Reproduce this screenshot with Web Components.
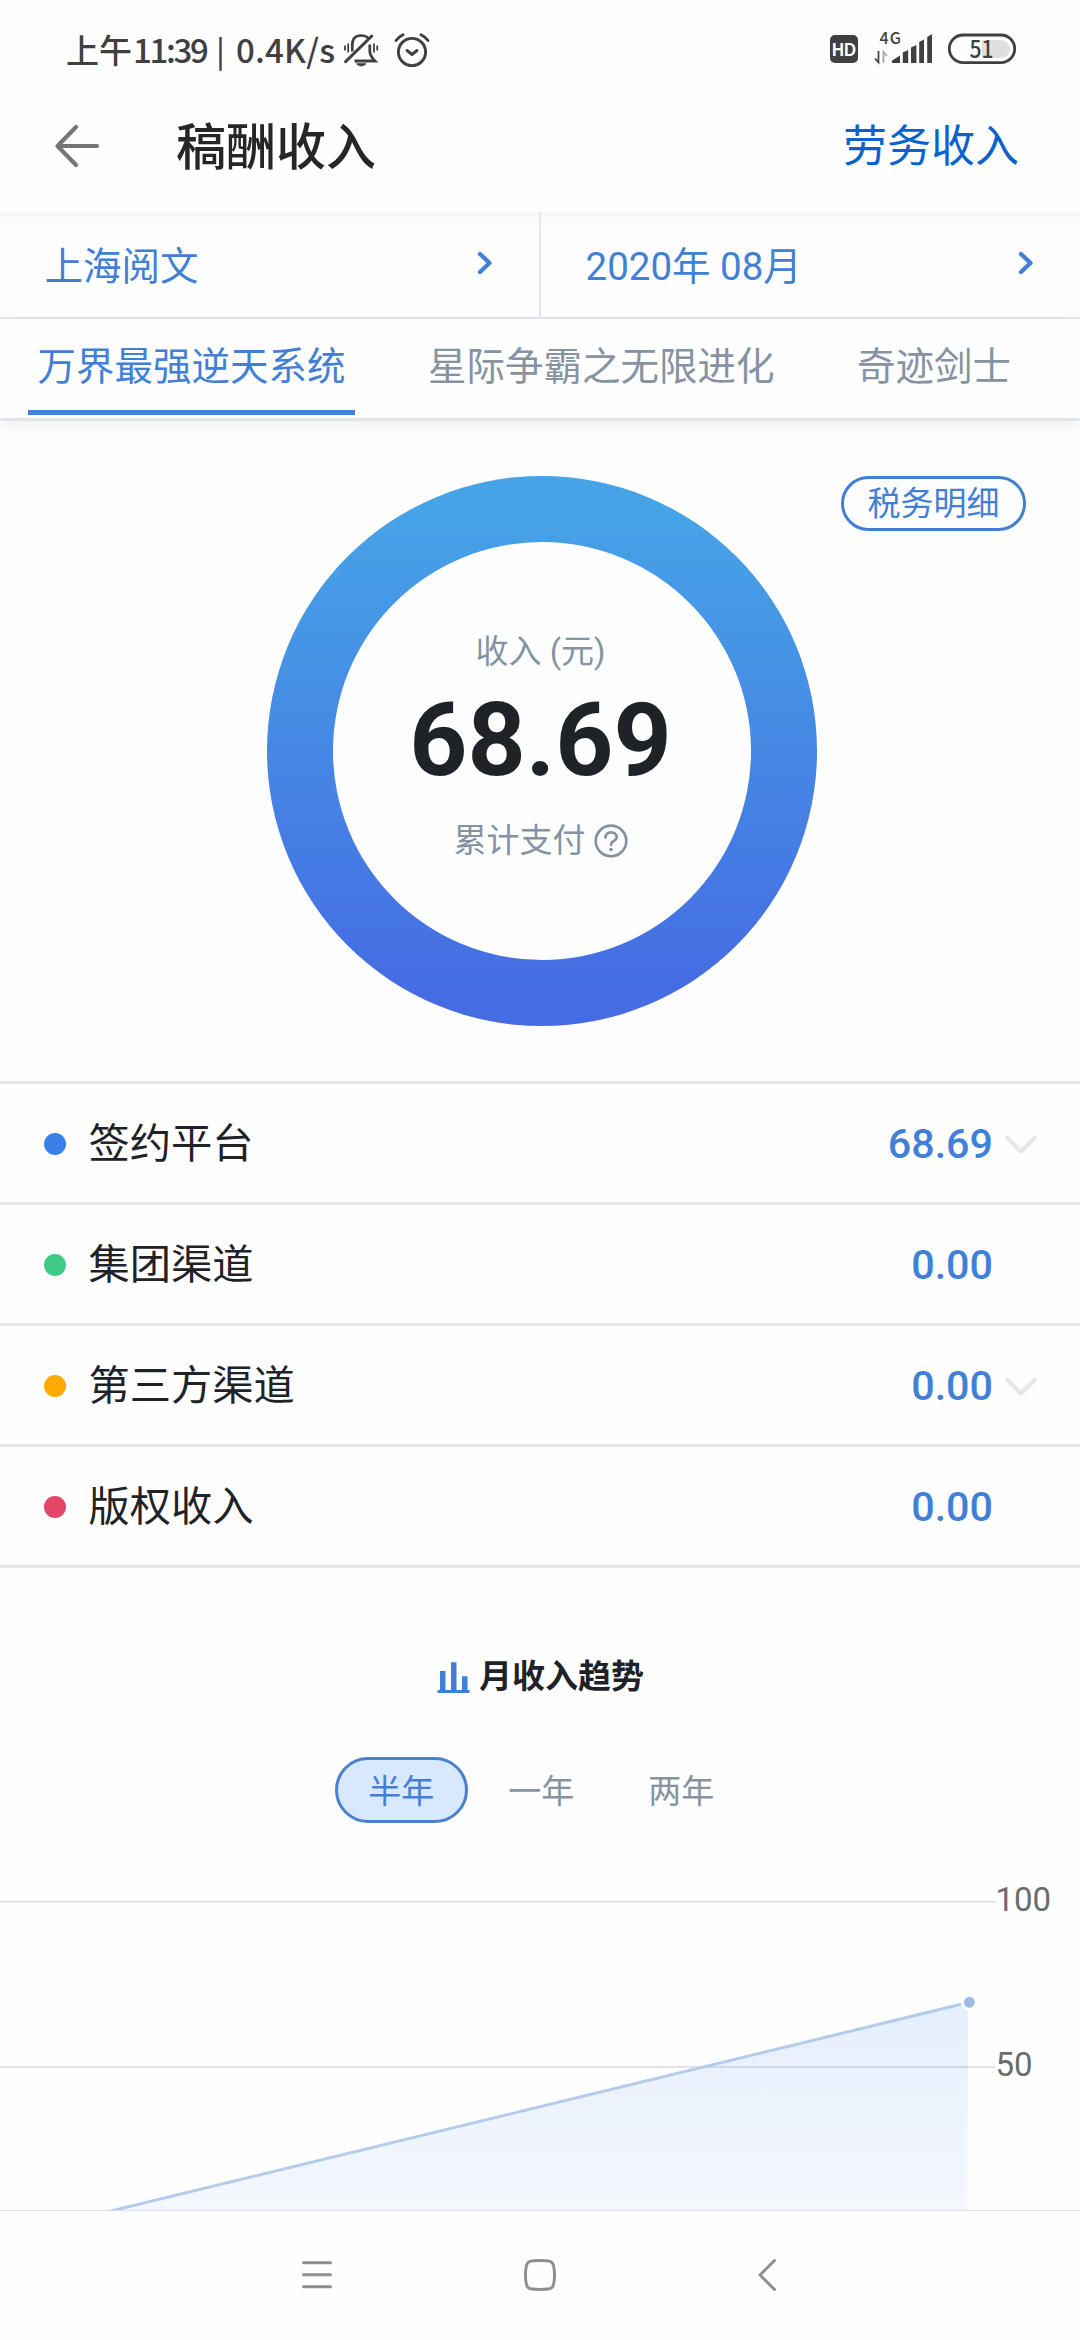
<!DOCTYPE html>
<html lang="zh-CN">
<head>
<meta charset="utf-8">
<title>稿酬收入</title>
<style>
html,body{margin:0;padding:0;background:#fefefe}
body{width:1080px;height:2340px;overflow:hidden;font-family:Roboto,"Noto Sans CJK SC",sans-serif;color:#1f2328}
</style>
</head>
<body>
<income-page></income-page>
<script>
const define=(name,html,init)=>customElements.define(name,class extends HTMLElement{
  constructor(){
    super();
    const t=document.createElement('template');
    t.innerHTML=html;
    this.attachShadow({mode:'open'}).append(t.content.cloneNode(true));
  }
  connectedCallback(){ if(init) init(this,this.shadowRoot); }
});

define('status-bar',`<style>
:host{display:flex;height:80px;padding:0 64px 0 66px;align-items:flex-start;justify-content:space-between;box-sizing:border-box;color:#404040}
.l,.r{display:flex;align-items:flex-start}
.t{display:flex;height:40px;margin-top:29px;line-height:40px;white-space:pre}
.cn{font:500 33px/40px "Noto Sans CJK SC",sans-serif}
.num{font:500 33px/41px "Noto Sans CJK SC",sans-serif;width:75px;margin-left:1px;letter-spacing:-2.300px}
.bar{width:25px;text-align:center;font:500 30px/40px "Noto Sans CJK SC",sans-serif}
.sp{font:500 33px/41px "Noto Sans CJK SC",sans-serif;letter-spacing:.2px;width:101px;margin-left:3px}
svg{display:block;overflow:visible}
</style>
<div class="l">
 <div class="t"><span class="cn">上午</span><span class="num">11:39</span><span class="bar">|</span><span class="sp">0.4K/s</span></div>
 <svg style="margin:30px 0 0 3px" width="42" height="40" viewBox="340 30 42 40" fill="none" stroke="#404040" stroke-width="2.700">
  <path d="M345.600 61.600L371.800 36" stroke-width="3" stroke-linecap="round"/>
  <path d="M352.300 51.500V45C352.300 38 356 35.500 361 35.500C364.500 35.500 367 36.500 368.500 38.500"/>
  <path d="M369.800 44.500V51C369.800 55.500 372 58 375 61H354.500" stroke-width="2.800"/>
  <path d="M356.500 63.800H366Q361.200 68 356.500 63.800Z" fill="#404040" stroke-width="1"/>
  <path d="M345 45.500V50.500M348.200 43.500V52.500M374 43.500V52.500M377.200 45.500V50.500" stroke-width="1.800"/>
 </svg>
 <svg style="margin:30px 0 0 9px" width="42" height="40" viewBox="391 30 42 40" fill="none" stroke="#404040" stroke-width="2.900" stroke-linecap="round" stroke-linejoin="round">
  <circle cx="412" cy="52" r="13.600"/><path d="M407 50.500L412 54.500L417 50.500M396 40.500Q398.500 37 403 34.800M428 40.500Q425.500 37 421 34.800"/>
 </svg>
</div>
<svg width="192" height="40" viewBox="828 30 192 40" style="margin:30px -4px 0 0" fill="#404040">
 <rect x="830" y="35" width="28" height="28" rx="5"/>
 <text x="844" y="55.500" font-family="Liberation Sans" font-weight="700" font-size="17.500" textLength="24" lengthAdjust="spacingAndGlyphs" fill="#fff" text-anchor="middle">HD</text>
 <text x="879.500" y="44" font-family="Noto Sans CJK SC" font-weight="500" font-size="16" textLength="21.500">4G</text>
 <path d="M878.500 51V62.500L875 58.500" fill="none" stroke="#404040" stroke-width="1.700"/>
 <path d="M883.500 62.700V52L887 56" fill="none" stroke="#a0a0a0" stroke-width="1.700"/>
 <path d="M892 63V60.500L900 55.500V63ZM902.800 63V52.500L908.200 50V63ZM911 63V47.500L916.400 45V63ZM919.200 63V42L924 39.500V63ZM927.200 63V37L932 34V63Z"/>
 <rect x="949.300" y="35" width="65.400" height="27.600" rx="13.800" fill="none" stroke="#404040" stroke-width="2.800"/>
 <path d="M982 40H1001A9 9 0 0 1 1001 58H982Z" fill="#e0e0e0"/>
 <text x="981.500" y="57.700" text-anchor="middle" font-family="Noto Sans CJK SC" font-weight="500" font-size="23.500" textLength="24" lengthAdjust="spacingAndGlyphs">51</text>
</svg>`);

define('app-header',`<style>
:host{display:flex;height:132px;align-items:center;padding:0 61px 0 53px;box-sizing:border-box}
svg{display:block}
.h{font-size:50px;font-weight:500;color:#262626;margin:0 0 7px 75px;flex:1;line-height:60px;font-family:"Noto Sans CJK SC",sans-serif}
.a{font-size:44px;color:#0a63cc;line-height:60px;margin-bottom:6px;font-family:"Noto Sans CJK SC",sans-serif}
</style>
<svg width="48" height="48" viewBox="53 122 48 48" fill="none" stroke="#757575" stroke-width="4.200" stroke-linecap="round" stroke-linejoin="round"><path d="M97 146H57.500M76 127L57.500 146L76 165"/></svg>
<div class="h"><slot></slot></div><div class="a"><slot name="action"></slot></div>`);

define('select-cell',`<style>
:host{display:flex;flex:1;justify-content:space-between;align-items:center;font-size:38.500px;color:#4180d6;height:102px;box-sizing:border-box;padding:0 43px 0 44.500px}
svg{display:block}
</style><slot></slot>
<svg width="20" height="28" viewBox="0 0 20 28" fill="none" stroke="#4180d6" stroke-width="4.300" stroke-linecap="round" stroke-linejoin="round"><path d="M4 5L13.500 14L4 23"/></svg>`);

define('select-row',`<style>
:host{display:flex;height:107px;box-sizing:border-box;border-bottom:2px solid #e4e6ea;background:linear-gradient(#f6f6f6 0,#fbfbfb 10px,#fefefe 20px)}
i{width:2px;background:#e6e7ea}
</style><slot name="a"></slot><i></i><slot name="b"></slot>`);

define('book-tab',`<style>
:host{display:flex;flex:none;flex-direction:column;height:99px;box-sizing:border-box;color:#8792a2;font-size:38.500px;line-height:56px;padding-top:20px;white-space:nowrap}
i{height:5px;margin:15px -9.500px 0}
:host([active]){color:#4180d6}
:host([active]) i{background:#4180da}
</style><slot></slot><i></i>`);

define('book-tabs',`<style>
:host{display:flex;height:102px;gap:82.500px;padding-left:37.500px;box-sizing:border-box;border-bottom:3px solid #e3e5e8;box-shadow:0 4px 14px rgba(60,80,100,.09)}
</style><slot></slot>`);

define('income-ring',`<style>
:host{display:grid;height:660px;grid-template-columns:266.500px 550px 1fr;padding-top:55px;box-sizing:border-box;align-items:start}
.ring{grid-column:2;width:550px;height:550px;border-radius:50%;background:linear-gradient(#46a4e6 5%,#456ce3 94%);display:grid;place-items:center}
.in{width:418px;height:418px;border-radius:50%;background:#fefefe;display:flex;flex-direction:column;align-items:center;box-sizing:border-box;padding:87px 2px 0 0}
.s{font-size:33px;line-height:46px;color:#8592a4;display:flex;align-items:center;gap:8px}
.n{font-size:101.500px;line-height:110px;font-weight:700;color:#1f2328;margin:11px 0 22px}
.pill{justify-self:end;margin-right:54px;width:185px;height:55px;border:3px solid #4180d0;border-radius:28px;box-sizing:border-box;display:flex;align-items:center;justify-content:center;font-size:33px;line-height:48px;color:#4180d6}
svg{display:block}
</style>
<div class="ring"><div class="in">
<div class="s">收入 (元)</div><div class="n">68.69</div>
<div class="s">累计支付<svg width="34" height="34" viewBox="0 0 34 34" fill="none" stroke="#8592a4" stroke-width="2.700" stroke-linecap="round"><circle cx="17" cy="17" r="15.300"/><path d="M11.500 13.500C11.500 6.500 22.700 6.800 22.700 13.200C22.700 17.300 17 16.500 17 20.800"/><circle cx="17" cy="25.500" r="1.800" fill="#8592a4" stroke="none"/></svg></div>
</div></div>
<div class="pill">税务明细</div>`);

define('channel-row',`<style>
:host{display:flex;height:121px;align-items:center;box-sizing:border-box;border-top:3px solid #e5e7eb;padding:1px 0 0 44px;font-size:41.250px;line-height:60px}
i{width:22px;height:22px;border-radius:50%;background:var(--dot);margin:1px 22.500px 0 0}
b{font-weight:500;color:#4180d6;margin-left:auto;font-size:41.250px}
svg{display:block;margin:2px 42px 0 11px;visibility:hidden}
:host([more]) svg{visibility:visible}
</style><i></i><slot></slot><b></b>
<svg width="34" height="24" viewBox="0 0 34 24" fill="none" stroke="#e5e7ea" stroke-width="4.200" stroke-linecap="round" stroke-linejoin="round"><path d="M3.500 5L17 18.500L30.500 5"/></svg>`,
(el,r)=>{r.querySelector('b').textContent=el.getAttribute('amount');el.style.setProperty('--dot',el.getAttribute('dot'));});

define('trend-head',`<style>
:host{display:flex;justify-content:center;align-items:center;gap:9px;height:60px;padding-left:1px;font-size:33px;font-weight:700;color:#1f2328;line-height:48px}
svg{display:block}
</style>
<svg width="33" height="34" viewBox="437 1660 33 34" fill="#4180da"><path d="M440 1671h5.500v20H440zM451 1662.300h5.500V1691H451zM462 1676.300h5.500V1691H462z"/><rect x="437.300" y="1690" width="32.500" height="3" rx="1.300"/></svg><slot></slot>`);

define('range-tabs',`<style>
:host{display:flex;height:66px;padding-left:335px;gap:7.500px}
span{display:flex;width:132.500px;height:66px;box-sizing:border-box;align-items:center;justify-content:center;padding-bottom:2px;font-size:33px;color:#8792a2;border-radius:33px}
.on{background:#d8e8ff;border:3px solid #4a80cc;color:#4180d6}
</style><span class="on">半年</span><span>一年</span><span>两年</span>`);

define('trend-chart',`<style>:host{display:block;height:340px}svg{display:block}</style>
<svg width="1080" height="340" viewBox="0 1870 1080 340">
<defs><linearGradient id="g" gradientUnits="userSpaceOnUse" x1="0" y1="2002" x2="0" y2="2232"><stop offset="0" stop-color="#3a84ee" stop-opacity=".13"/><stop offset="1" stop-color="#3a84ee" stop-opacity=".04"/></linearGradient></defs>
<path d="M0 1901.700H995.500M0 2067H995.500" stroke="#e0e2e6" stroke-width="2"/>
<path d="M23.300 2232.300L967.700 2002.700V2232.300Z" fill="url(#g)"/>
<path d="M23.300 2232.300L969.300 2002.300" stroke="#b3cbec" stroke-width="3"/>
<circle cx="969.300" cy="2002.300" r="7" fill="#a0bbe3" stroke="#fefefe" stroke-width="3"/>
<g font-family="Roboto" font-size="33" fill="#6b6b6b"><text x="995.500" y="1910.500">100</text><text x="995.500" y="2075.500">50</text></g>
</svg>`);

define('nav-bar',`<style>:host{display:flex;height:130px;box-sizing:border-box;border-top:1px solid #dfdfdf;padding:44px 300px 0}svg{display:block;flex:none}</style>
<svg width="34" height="40" viewBox="300 2255 34 40" stroke="#8e8e8e" stroke-width="3" stroke-linecap="round"><path d="M303.500 2262.700H330.500M303.500 2274.700H330.500M303.500 2286.700H330.500"/></svg>
<svg style="margin:0 196px 0 186px" width="40" height="40" viewBox="520 2255 40 40" fill="none" stroke="#8e8e8e" stroke-width="3"><path d="M540 2260.500C552 2260.500 554.500 2260.500 554.500 2275S552 2289.500 540 2289.500S525.500 2289.500 525.500 2275S528 2260.500 540 2260.500Z"/></svg>
<svg width="24" height="40" viewBox="756 2255 24 40" fill="none" stroke="#8e8e8e" stroke-width="3" stroke-linecap="round" stroke-linejoin="round"><path d="M774.500 2260.500L760 2275L774.500 2289.500"/></svg>`);

define('income-page',`<style>
:host{display:flex;flex-direction:column;width:1080px;height:2340px;background:#fefefe}
channel-row:last-of-type{border-bottom:3px solid #e5e7eb;height:124px}
trend-head{margin-top:79px}
range-tabs{margin-top:50px}
trend-chart{margin-top:auto}
</style>
<status-bar></status-bar>
<app-header>稿酬收入<span slot="action">劳务收入</span></app-header>
<select-row><select-cell slot="a">上海阅文</select-cell><select-cell slot="b">2020年 08月</select-cell></select-row>
<book-tabs><book-tab active>万界最强逆天系统</book-tab><book-tab>星际争霸之无限进化</book-tab><book-tab>奇迹剑士</book-tab></book-tabs>
<income-ring></income-ring>
<channel-row dot="#3a80e6" amount="68.69" more>签约平台</channel-row>
<channel-row dot="#3ecc85" amount="0.00">集团渠道</channel-row>
<channel-row dot="#ffaa00" amount="0.00" more>第三方渠道</channel-row>
<channel-row dot="#e54566" amount="0.00">版权收入</channel-row>
<trend-head>月收入趋势</trend-head>
<range-tabs></range-tabs>
<trend-chart></trend-chart>
<nav-bar></nav-bar>`);
</script>
</body>
</html>
